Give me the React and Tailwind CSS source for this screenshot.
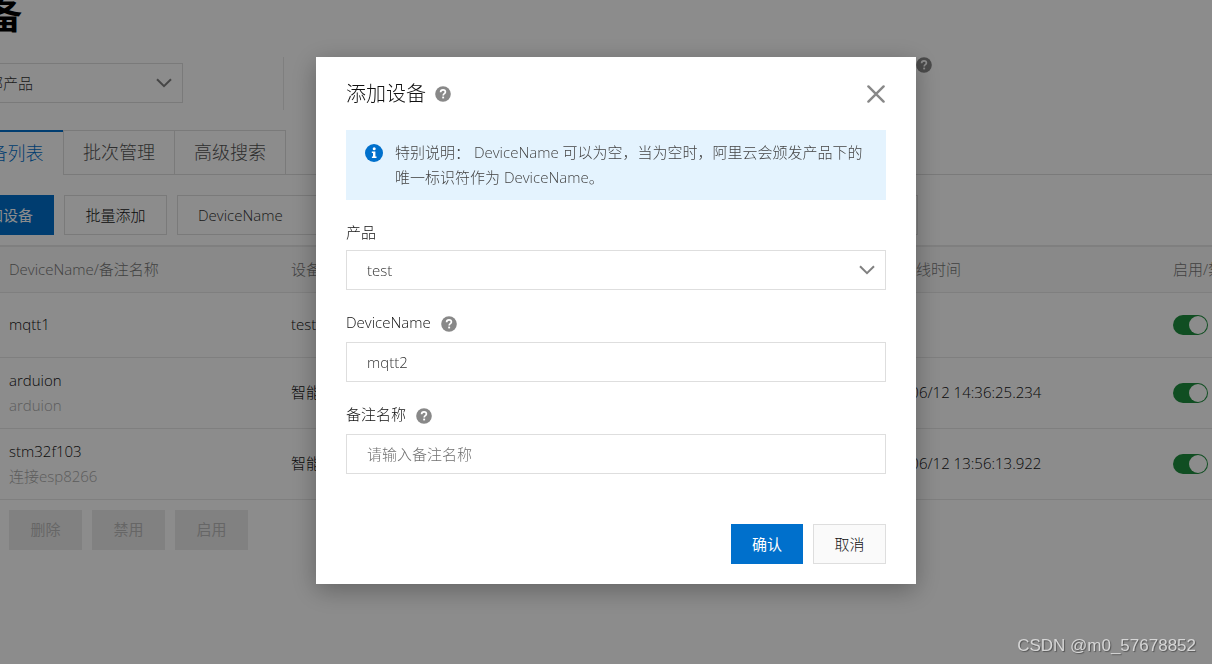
import React, { useState } from 'react';
import clsx from 'clsx';

const devices = [
    { name: 'mqtt1', remark: '', product: 'test', lastOnline: '' },
    { name: 'arduion', remark: 'arduion', product: '智能', lastOnline: '2021/06/12 14:36:25.234' },
    { name: 'stm32f103', remark: '连接esp8266', product: '智能', lastOnline: '2021/06/12 13:56:13.922' }
];

const tabs = ['设备列表', '批次管理', '高级搜索'];

const HelpIcon = ({ className }) => (
    <svg viewBox="0 0 16 16" className={clsx('size-4 shrink-0', className)} aria-hidden="true">
        <circle cx="8" cy="8" r="7.8" fill="#888888" />
        <path
            d="M5.6 6.3C5.6 4.7 6.6 3.9 8 3.9s2.4.8 2.4 2.1c0 1.7-2.2 1.7-2.2 3.4"
            fill="none"
            stroke="#fff"
            strokeWidth="1.7"
        />
        <rect x="7.2" y="10.6" width="1.9" height="1.8" fill="#fff" />
    </svg>
);

const InfoIcon = () => (
    <svg viewBox="0 0 18 18" className="mt-1 size-[18px] shrink-0" aria-hidden="true">
        <circle cx="9" cy="9" r="9" fill="#0070cc" />
        <circle cx="9.2" cy="4.8" r="1.5" fill="#fff" />
        <path d="M6.8 7.4h3.6v5.2h1.1v1.5H6.9v-1.5H8V8.9H6.8z" fill="#fff" />
    </svg>
);

const ChevronIcon = ({ className }) => (
    <svg
        viewBox="0 0 16 10"
        className={clsx('pointer-events-none absolute h-[10px] w-4', className)}
        fill="none"
        stroke="#808080"
        strokeWidth="2"
        aria-hidden="true"
    >
        <path d="M1 1.2l7 7 7-7" />
    </svg>
);

const CloseIcon = () => (
    <svg viewBox="0 0 18 18" className="size-[18px]" stroke="#888888" strokeWidth="2.4" strokeLinecap="round" aria-hidden="true">
        <path d="M1.4 1.4l15.2 15.2M16.6 1.4L1.4 16.6" />
    </svg>
);

const boxClass = 'h-10 border border-[#dedede] bg-white px-5 text-[#333333] outline-none';

// Pole formularza w oknie dialogowym
const Field = ({ id, label, help, children }) => (
    <div>
        <div className={clsx('flex items-center gap-[10px]', help ? 'mb-[7px]' : 'mb-[5px]')}>
            <label htmlFor={id}>{label}</label>
            {help && <HelpIcon className="mt-[3px]" />}
        </div>
        {children}
    </div>
);

const DeviceTable = () => (
    <table className="mt-[10px] w-full table-fixed border-t-2 border-[#e8e8e8] text-left">
        <colgroup>
            <col className="w-[41px]" />
            <col className="w-[282px]" />
            <col />
            <col />
            <col className="w-[302px]" />
            <col className="w-[151px]" />
        </colgroup>
        <thead className="bg-[#f9f9f9] text-[#777777]">
            <tr className="h-[46px] border-b border-[#e8e8e8]">
                <th className="pl-4"><input type="checkbox" aria-label="全选" className="block" /></th>
                <th className="px-4 font-light">DeviceName/备注名称</th>
                <th className="px-4 font-light">设备所属产品</th>
                <th className="px-4 font-light">节点类型</th>
                <th className="px-4 font-light">最后上线时间</th>
                <th className="px-4 font-light">启用/禁用</th>
            </tr>
        </thead>
        <tbody>
            {devices.map((device) => (
                <tr key={device.name} className="h-[65px] border-b border-[#e8e8e8]">
                    <td className="pl-4"><input type="checkbox" aria-label={device.name} className="block" /></td>
                    <td className="px-4 py-[10px]">
                        <div>{device.name}</div>
                        {device.remark && <div className="text-[#aaaaaa]">{device.remark}</div>}
                    </td>
                    <td className="px-4">{device.product}</td>
                    <td className="px-4">设备</td>
                    <td className="px-4">{device.lastOnline}</td>
                    <td className="px-4">
                        <input
                            type="checkbox"
                            role="switch"
                            defaultChecked
                            aria-label={`启用 ${device.name}`}
                            className="flex h-5 w-[35px] appearance-none rounded-full bg-[#cccccc] p-px before:block before:size-[18px] before:rounded-full before:bg-white checked:justify-end checked:bg-[#1e8e3e]"
                        />
                    </td>
                </tr>
            ))}
        </tbody>
    </table>
);

const DevicePage = () => (
    <main className="-mr-24 -ml-12">
        <h1 className="-mt-1 text-[35px] leading-10 font-bold text-black">设备</h1>

        <div className="mt-[21px] flex h-[53px] items-start">
            <div className="relative mt-[6px] w-[231px]">
                <select aria-label="产品" className={clsx(boxClass, 'block w-full appearance-none')}>
                    <option>全部产品</option>
                </select>
                <ChevronIcon className="top-[15px] right-[11px]" />
            </div>
            <div className="ml-[100px] h-full border-l border-[#e8e8e8]" />
            <dl className="ml-[120px] flex leading-4">
                <div className="flex w-[224px] gap-2"><dt>设备总数</dt><HelpIcon /></div>
                <div className="flex w-[224px] gap-2"><dt>激活设备</dt><HelpIcon /></div>
                <div className="flex items-center gap-[34px]"><dt>在线</dt><HelpIcon /></div>
            </dl>
        </div>

        <div role="tablist" className="mt-5 flex h-[45px] text-[18px]">
            {tabs.map((tab, index) => (
                <button
                    key={tab}
                    type="button"
                    role="tab"
                    aria-selected={index === 0}
                    className={clsx(
                        'w-[111px] shrink-0',
                        index === 0
                            ? 'border-t-2 border-[#0070cc] text-[#0070cc]'
                            : 'border-y border-l border-[#dedede] text-[#555555]'
                    )}
                >
                    {tab}
                </button>
            ))}
            <div className="flex-1 border-b border-l border-[#dedede]" />
        </div>

        <div className="mt-5 flex h-10">
            <button type="button" className="w-[102px] bg-[#0070cc] font-normal text-white">添加设备</button>
            <button type="button" className="ml-[10px] w-[103px] border border-[#dedede]">批量添加</button>
            <div className="relative ml-[10px] w-[180px]">
                <select aria-label="搜索方式" className={clsx(boxClass, 'w-full appearance-none')}>
                    <option>DeviceName</option>
                </select>
                <ChevronIcon className="top-[15px] right-[11px]" />
            </div>
            <input type="search" aria-label="搜索" className={clsx(boxClass, 'w-[561px] border-l-0')} />
        </div>

        <DeviceTable />

        <div className="mt-[10px] ml-[57px] flex gap-[10px]">
            {['删除', '禁用', '启用'].map((action) => (
                <button key={action} type="button" disabled className="h-10 w-[73px] bg-[#ebebeb] font-normal text-[#bbbbbb]">
                    {action}
                </button>
            ))}
        </div>
    </main>
);

const AddDeviceDialog = () => {
    const [deviceName, setDeviceName] = useState('mqtt2');
    const [remark, setRemark] = useState('');

    return (
        <div className="fixed inset-0 flex items-start justify-center bg-black/45 pt-[57px] pl-5">
            <div
                role="dialog"
                aria-labelledby="dialog-title"
                className="w-[600px] bg-white px-[30px] pt-5 pb-5 shadow-[0_6px_24px_rgba(0,0,0,0.3)]"
            >
                <div className="flex h-[33px] items-center pr-px">
                    <h2 id="dialog-title" className="text-[20px] text-[#111111]">添加设备</h2>
                    <HelpIcon className="ml-[9px]" />
                    <button type="button" aria-label="关闭" className="ml-auto">
                        <CloseIcon />
                    </button>
                </div>

                <div className="mt-5 mb-5 flex gap-3 bg-[#e4f3fe] py-[10px] pr-5 pl-[19px] text-[#444444]">
                    <InfoIcon />
                    <p>特别说明： DeviceName 可以为空，当为空时，阿里云会颁发产品下的唯一标识符作为 DeviceName。</p>
                </div>

                <div className="flex flex-col gap-5">
                    <Field id="product" label="产品">
                        <div className="relative">
                            <select id="product" className={clsx(boxClass, 'block w-full appearance-none')}>
                                <option>test</option>
                            </select>
                            <ChevronIcon className="top-[15px] right-[11px]" />
                        </div>
                    </Field>
                    <Field id="device-name" label="DeviceName" help>
                        <input
                            id="device-name"
                            type="text"
                            value={deviceName}
                            onChange={(e) => setDeviceName(e.target.value)}
                            className={clsx(boxClass, 'block w-full')}
                        />
                    </Field>
                    <Field id="remark" label="备注名称" help>
                        <input
                            id="remark"
                            type="text"
                            placeholder="请输入备注名称"
                            value={remark}
                            onChange={(e) => setRemark(e.target.value)}
                            className={clsx(boxClass, 'block w-full placeholder:text-[#707070]')}
                        />
                    </Field>
                </div>

                <div className="mt-[50px] flex justify-end gap-[10px]">
                    <button type="button" className="h-10 w-[72px] bg-[#0070cc] font-normal text-white">确认</button>
                    <button type="button" className="h-10 w-[73px] border border-[#dedede] bg-[#fafafa]">取消</button>
                </div>
            </div>
        </div>
    );
};

const App = () => (
    <div className="min-h-screen overflow-hidden bg-white font-['Open_Sans','Noto_Sans_CJK_SC',sans-serif] text-[15px] leading-[25px] font-light text-[#111111]">
        <DevicePage />
        <AddDeviceDialog />
        <div className="fixed right-4 bottom-2 font-['Liberation_Sans',sans-serif] text-[17px] leading-5 font-normal text-[#d6d6d6] [text-shadow:1px_1px_1px_#555555]">
            CSDN @m0_57678852
        </div>
    </div>
);

export default App;
